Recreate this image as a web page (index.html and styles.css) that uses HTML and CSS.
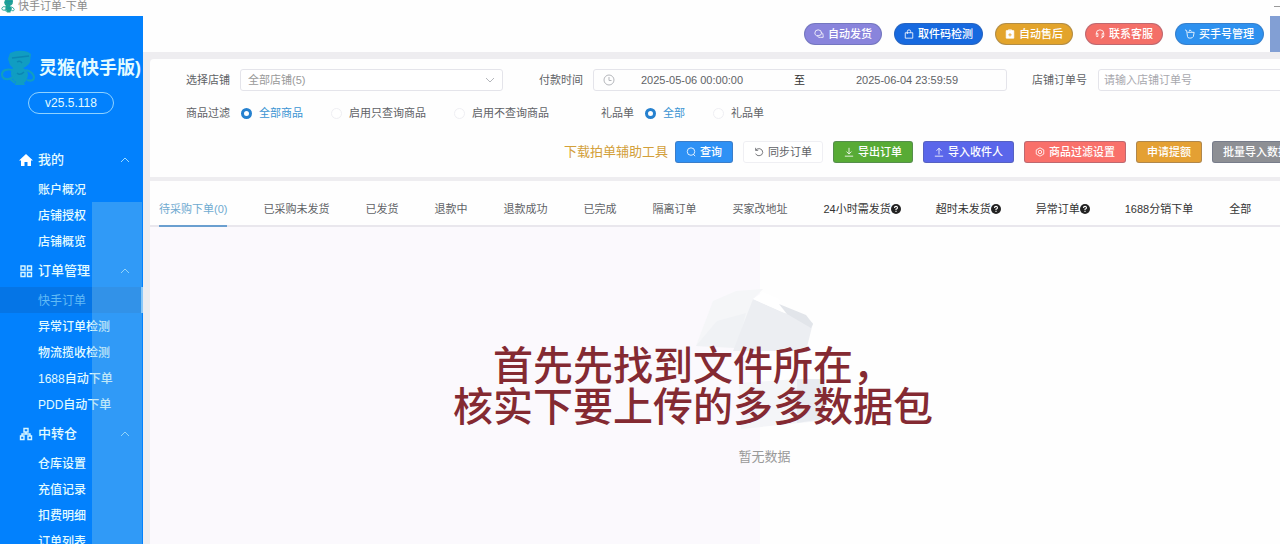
FILE: index.html
```html
<!DOCTYPE html>
<html lang="zh-CN">
<head>
    <meta charset="UTF-8">
    <meta name="viewport" content="width=device-width, initial-scale=1.0">
    <title>快手订单-下单</title>
    <link rel="stylesheet" href="styles.css">
</head>
<body>

    <div class="titlebar">
        <svg class="title-logo" viewBox="0 0 36 36"><use href="#monkey"/></svg>
        <span>快手订单-下单</span>
        <span class="minimize"></span>
    </div>

    <!-- shared icons -->
    <svg class="sprite">
        <symbol id="monkey" viewBox="0 0 36 36">
            <path d="M10 3 Q19 -1 28 2 L31 4 L30 12 Q28 16 23 18 Q28 20 28 25 Q27 31 24 33 L25 35 H15 L16 32 Q12 30 11 24 Q11 20 13 18 L10 15 L8 9 Z" fill="currentColor"/>
            <path d="M13 20 Q3 18 2 24 Q2 30 9 29 Q14 28 15 23 M26 20 Q33 22 34 27 Q34 32 27 30 M9 28 L15 33" fill="none" stroke="currentColor" stroke-width="2.2"/>
            <path d="M12 8 L29 6 M17 12 Q20 10 22 13 M17 23 Q20 26 24 22" fill="none" stroke="#0b86b4" stroke-width="1.4"/>
        </symbol>
        <symbol id="chevron" viewBox="0 0 10 10"><path d="M1 7 L5 3 L9 7" fill="none" stroke="currentColor"/></symbol>
        <symbol id="help" viewBox="0 0 10 10">
            <circle cx="5" cy="5" r="5" fill="#222"/>
            <path d="M3.5 4 Q3.5 2.4 5 2.4 Q6.6 2.4 6.5 3.9 Q6.4 4.7 5 5.2 V6.2 M5 7 V8" fill="none" stroke="#fff" stroke-width="1.1"/>
        </symbol>
    </svg>

    <div class="layout">
        <aside class="sidebar">
            <div class="brand">
                <svg class="brand-logo" viewBox="0 0 36 36"><use href="#monkey"/></svg>
                <h1>灵猴(快手版)</h1>
            </div>
            <div class="version">v25.5.118</div>

            <nav class="menu">
                <button class="menu-head">
                    <svg class="menu-icon" viewBox="0 0 14 14"><path d="M7 1 L0 7.5 H2 V13 H5.5 V9 H8.5 V13 H12 V7.5 H14 Z" fill="#fff"/></svg>
                    <span>我的</span>
                    <svg class="arrow"><use href="#chevron"/></svg>
                </button>
                <a href="#">账户概况</a>
                <a href="#">店铺授权</a>
                <a href="#">店铺概览</a>

                <button class="menu-head">
                    <svg class="menu-icon" viewBox="0 0 14 14"><path d="M2 2 H6 V6 H2 Z M8.5 2 H12.5 V6 H8.5 Z M2 8.5 H6 V12.5 H2 Z M8.5 8.5 H12.5 V12.5 H8.5 Z" fill="none" stroke="#d8f6ff" stroke-width="1.4"/></svg>
                    <span>订单管理</span>
                    <svg class="arrow"><use href="#chevron"/></svg>
                </button>
                <a href="#" class="active">快手订单</a>
                <a href="#">异常订单检测</a>
                <a href="#">物流揽收检测</a>
                <a href="#">1688自动下单</a>
                <a href="#">PDD自动下单</a>

                <button class="menu-head">
                    <svg class="menu-icon" viewBox="0 0 14 14"><path d="M5 1.5 H9 V5 H5 Z M1.5 9 H5 V12.5 H1.5 Z M9 9 H12.5 V12.5 H9 Z M7 5 V7 M3 9 V7 H11 V9" fill="none" stroke="#d8f6ff" stroke-width="1.4"/></svg>
                    <span>中转仓</span>
                    <svg class="arrow"><use href="#chevron"/></svg>
                </button>
                <a href="#">仓库设置</a>
                <a href="#">充值记录</a>
                <a href="#">扣费明细</a>
                <a href="#">订单列表</a>
            </nav>
            <div class="sheen"></div>
        </aside>

        <div class="content">
            <header class="topbar">
                <button class="pill purple">
                    <svg viewBox="0 0 12 12"><path d="M1 5 Q1 1 5 1 Q9 1 9 5 Q9 8 5 8 H3 Q1 7 1 5 Z M9 4 Q11 5 11 8 V10 H8 Q5 11 4 8"/></svg>自动发货
                </button>
                <button class="pill blue">
                    <svg viewBox="0 0 12 12"><path d="M1.5 4.5 H10.5 V11 H1.5 Z M4 6 V3 Q4 1 6 1 Q8 1 8 3 V4.5"/></svg>取件码检测
                </button>
                <button class="pill gold">
                    <svg viewBox="0 0 12 12"><path d="M1.5 2 H10.5 V11 H1.5 Z" fill="#fff"/><path d="M4 1 H8 V3 H4 Z"/><path d="M4 7 H8 M6 5 V9" stroke="#e3a42b"/></svg>自动售后
                </button>
                <button class="pill red">
                    <svg viewBox="0 0 12 12"><path d="M1.5 8 V5.5 Q1.5 1 6 1 Q10.5 1 10.5 5.5 V8 Q10 10.5 7 11 M1.5 5.5 H3.5 V9 H1.5 M10.5 5.5 H8.5 V9 H10.5"/></svg>联系客服
                </button>
                <button class="pill sky">
                    <svg viewBox="0 0 12 12"><path d="M0 1 L2 2 L3 9 Q3 11 6 11 Q9 11 10 9 L11 4 H3 M5 3 L6 1 L8 3"/></svg>买手号管理
                </button>
                <div class="topbar-end"></div>
            </header>

            <section class="panel filters">
                <div class="row">
                    <label for="shop">选择店铺</label>
                    <div class="select-box">
                        <select id="shop"><option>全部店铺(5)</option></select>
                        <svg class="down"><use href="#chevron"/></svg>
                    </div>
                    <label for="start" class="label-next">付款时间</label>
                    <div class="range">
                        <svg viewBox="0 0 12 12"><circle cx="6" cy="6" r="5"/><path d="M6 3 V6.5 H8.5"/></svg>
                        <input type="text" id="start" value="2025-05-06 00:00:00">
                        <span>至</span>
                        <input type="text" value="2025-06-04 23:59:59" aria-label="结束时间">
                    </div>
                    <label for="orderno" class="label-order">店铺订单号</label>
                    <input type="text" id="orderno" class="order-input" placeholder="请输入店铺订单号">
                </div>

                <div class="row">
                    <span class="row-label">商品过滤</span>
                    <div class="radios goods">
                        <label><input type="radio" name="goods" checked><span>全部商品</span></label>
                        <label><input type="radio" name="goods"><span>启用只查询商品</span></label>
                        <label><input type="radio" name="goods"><span>启用不查询商品</span></label>
                    </div>
                    <span class="row-label gift-label">礼品单</span>
                    <div class="radios">
                        <label><input type="radio" name="gift" checked><span>全部</span></label>
                        <label><input type="radio" name="gift"><span>礼品单</span></label>
                    </div>
                </div>

                <div class="row actions">
                    <a href="#" class="tool-link">下载拍单辅助工具</a>
                    <button class="btn primary">
                        <svg viewBox="0 0 12 12"><circle cx="6" cy="5.5" r="4.5"/><path d="M9 9 L11 11"/></svg>查询
                    </button>
                    <button class="btn plain">
                        <svg viewBox="0 0 12 12"><path d="M2 4 Q4 1.5 7 2 Q10.5 3 10.5 6.5 Q10 10.5 6 10.5 Q3 10.5 2 8 M2 1 V4 H5"/></svg>同步订单
                    </button>
                    <button class="btn green">
                        <svg viewBox="0 0 12 12"><path d="M6 1 V8 M3 5.5 L6 8.5 L9 5.5 M1 11 H11"/></svg>导出订单
                    </button>
                    <button class="btn indigo">
                        <svg viewBox="0 0 12 12"><path d="M6 9 V1.5 M3 4.5 L6 1.5 L9 4.5 M1 11 H11"/></svg>导入收件人
                    </button>
                    <button class="btn coral">
                        <svg viewBox="0 0 12 12"><path d="M6 1 L10.5 3.5 V8.5 L6 11 L1.5 8.5 V3.5 Z"/><circle cx="6" cy="6" r="2"/></svg>商品过滤设置
                    </button>
                    <button class="btn orange">申请提额</button>
                    <button class="btn gray">批量导入数据</button>
                </div>
            </section>

            <section class="panel orders">
                <div class="tabs">
                    <button class="tab active">待采购下单(0)</button>
                    <button class="tab">已采购未发货</button>
                    <button class="tab">已发货</button>
                    <button class="tab">退款中</button>
                    <button class="tab">退款成功</button>
                    <button class="tab">已完成</button>
                    <button class="tab">隔离订单</button>
                    <button class="tab">买家改地址</button>
                    <button class="tab dark">24小时需发货<svg><use href="#help"/></svg></button>
                    <button class="tab dark">超时未发货<svg><use href="#help"/></svg></button>
                    <button class="tab dark">异常订单<svg><use href="#help"/></svg></button>
                    <button class="tab dark">1688分销下单</button>
                    <button class="tab dark">全部</button>
                </div>
                <div class="empty">
                    <svg class="empty-art" viewBox="694 284 140 150">
                        <path d="M712 300 L735 290 L762 288 L752 298 L736 347 L695 345 Z" fill="#f5f6f8"/>
                        <path d="M716 320 L745 312 L736 347 L695 345 Z" fill="#f0f2f5"/>
                        <path d="M752 298 L781 311 L812 322 L805 350 L732 350 Z" fill="#eceef2"/>
                        <path d="M752 298 L762 291 L778 298 L784 312 Z" fill="#ffffff"/>
                        <path d="M778 303 L805 314 L812 323 L810 327 L786 313 Z" fill="#e2e5ea"/>
                        <path d="M738 382 L796 378 L820 378 L819 420 L740 428 Z" fill="#f4f5f8"/>
                        <path d="M796 378 L824 378 L822 418 L796 422 Z" fill="#e8ebf0"/>
                    </svg>
                    <p>暂无数据</p>
                </div>
            </section>
        </div>
    </div>

    <div class="caption">首先先找到文件所在，<br>核实下要上传的多多数据包</div>

</body>
</html>
```
FILE: styles.css
```css
* {
    box-sizing: border-box;
}
body {
    margin: 0;
    height: 100vh;
    display: flex;
    flex-direction: column;
    overflow: hidden;
    position: relative;
    font-family: "Liberation Sans", "Noto Sans CJK SC", sans-serif;
    font-size: 11px;
    line-height: 16px;
    color: #606266;
    background-color: #fefefe;
}
button, input, select {
    font: inherit;
    color: inherit;
    margin: 0;
}
button {
    cursor: pointer;
    white-space: nowrap;
}
a {
    text-decoration: none;
}
.sprite {
    display: none;
}

/* window title */
.titlebar {
    display: flex;
    align-items: center;
    height: 16px;
    padding-bottom: 4px;
    color: #8a8a8a;
}
.title-logo {
    width: 16px;
    height: 14px;
    margin-right: 2px;
    color: #20a294;
}
.minimize {
    width: 6px;
    height: 1px;
    margin-left: auto;
    background-color: #999;
}
.layout {
    flex: 1;
    display: flex;
    min-height: 0;
}

/* sidebar */
.sidebar {
    position: relative;
    flex: none;
    width: 143px;
    padding-top: 32px;
    overflow: hidden;
    background-color: #0281fd;
    color: #e3fbff;
}
.brand {
    display: flex;
    align-items: center;
    height: 40px;
}
.brand-logo {
    flex: none;
    width: 36px;
    height: 36px;
    margin-right: 3px;
    color: #109dc2;
}
.brand h1 {
    margin: 0;
    font-size: 18px;
    line-height: 24px;
    white-space: nowrap;
}
.version {
    width: 86px;
    margin: 4px 0 29px 28px;
    border: 1px solid #8fd2ff;
    border-radius: 11px;
    font-size: 12px;
    font-weight: 500;
    line-height: 20px;
    text-align: center;
}
.menu {
    display: flex;
    flex-direction: column;
}
.menu-head {
    display: flex;
    align-items: center;
    height: 33px;
    padding: 0 13px 0 19px;
    border: none;
    background: none;
    font-size: 13px;
    font-weight: 500;
}
.menu-icon {
    width: 14px;
    height: 14px;
    margin-right: 5px;
}
.arrow {
    width: 10px;
    height: 10px;
    margin-left: auto;
    color: #9fdcff;
}
.menu a {
    padding: 3px 0 0 38px;
    font-size: 12px;
    font-weight: 500;
    line-height: 23px;
    color: #e3fbff;
}
.menu a.active {
    background-color: #0575e6;
    border-right: 2px solid #8cc9fb;
    color: #62bbf6;
    font-weight: 400;
}
.sheen {
    position: absolute;
    top: 186px;
    left: 92px;
    right: 1px;
    bottom: 0;
    background-color: rgba(130, 200, 235, 0.36);
    pointer-events: none;
}

/* content */
.content {
    flex: 1;
    min-width: 0;
    display: flex;
    flex-direction: column;
    background-color: #eeedf0;
}
.topbar {
    display: flex;
    align-items: center;
    justify-content: flex-end;
    gap: 12px;
    height: 36px;
    background-color: #fefefe;
}
.topbar-end {
    align-self: stretch;
    width: 10px;
    margin-left: -6px;
    background-color: #829fd4;
}
.pill {
    display: flex;
    align-items: center;
    gap: 4px;
    height: 22px;
    padding: 0 9px;
    border: 1px solid rgba(70, 90, 130, 0.3);
    border-radius: 11px;
    color: #fff;
    font-weight: 500;
}
.pill svg, .btn svg {
    width: 10px;
    height: 10px;
    fill: none;
    stroke: currentColor;
}
.purple { background-color: #8984dc; }
.blue { background-color: #1769df; }
.gold { background-color: #e3a42b; }
.red { background-color: #f46f68; }
.sky { background-color: #2e91ef; }

.panel {
    margin-left: 7px;
    background-color: #fefefe;
    overflow: hidden;
}
.filters {
    margin-top: 7px;
    padding: 10px 0 14px 36px;
    border-radius: 4px 0 0 0;
}
.row {
    display: flex;
    align-items: center;
    height: 22px;
    white-space: nowrap;
}
.row + .row {
    margin-top: 11px;
}
.row > * {
    flex: none;
}
.select-box {
    position: relative;
    width: 263px;
    margin-left: 10px;
}
.select-box select {
    display: block;
    width: 100%;
    height: 22px;
    padding: 0 7px;
    border: 1px solid #e4e4ea;
    border-radius: 3px;
    background-color: #fff;
    color: #999;
    appearance: none;
}
.down {
    position: absolute;
    top: 6px;
    right: 8px;
    width: 10px;
    height: 10px;
    color: #b4b6bb;
    transform: rotate(180deg);
    pointer-events: none;
}
.label-next {
    margin-left: 36px;
}
.range {
    display: flex;
    align-items: center;
    width: 414px;
    height: 22px;
    margin-left: 10px;
    padding: 0 22px 0 9px;
    border: 1px solid #e4e4ea;
    border-radius: 3px;
}
.range svg {
    width: 12px;
    height: 12px;
    fill: none;
    stroke: #b4b6bb;
}
.range input {
    flex: 1;
    min-width: 0;
    padding: 0;
    border: none;
    background: none;
    text-align: center;
}
.range span {
    padding: 0 25px;
    color: #333;
}
.label-order {
    margin-left: 25px;
}
.order-input {
    width: 263px;
    height: 22px;
    margin-left: 11px;
    padding: 0 5px;
    border: 1px solid #e4e4ea;
    border-radius: 3px;
}
.order-input::placeholder {
    color: #a8a8ae;
}
.radios {
    display: flex;
    gap: 28px;
    margin-left: 11px;
}
.radios label {
    display: flex;
    align-items: center;
    gap: 7px;
}
.radios input {
    width: 11px;
    height: 11px;
    border: 1px solid #efeff3;
    border-radius: 50%;
    background-color: #fff;
    appearance: none;
}
.radios input:checked {
    border: 3px solid #2681cf;
}
.radios input:checked + span {
    color: #3b94d3;
}
.gift-label {
    margin-left: 52px;
}
.row.actions {
    gap: 10px;
    margin-top: 17px;
    padding-left: 378px;
}
.tool-link {
    margin-right: -3px;
    font-size: 13px;
    color: #d3a03a;
}
.btn {
    display: flex;
    align-items: center;
    gap: 4px;
    height: 22px;
    padding: 0 10px;
    border: 1px solid rgba(80, 90, 120, 0.35);
    border-radius: 3px;
    color: #fff;
    font-weight: 500;
}
.btn.plain {
    border-color: #efeff3;
    background-color: #fff;
    color: #606266;
    font-weight: 400;
}
.primary { background-color: #2e91f5; }
.green { background-color: #58ab35; }
.indigo { background-color: #5a66ea; }
.coral { background-color: #f9706a; }
.orange { background-color: #e4a033; }
.gray { background-color: #8d8f94; }

/* order tabs */
.orders {
    flex: 1;
    display: flex;
    flex-direction: column;
    margin-top: 4px;
}
.tabs {
    display: flex;
    gap: 36px;
    height: 46px;
    padding: 14px 0 0 9px;
    border-bottom: 2px solid #e9e7ed;
}
.tab {
    display: flex;
    flex: none;
    align-items: center;
    margin-bottom: -2px;
    padding: 0 0 2px;
    border: none;
    border-bottom: 2px solid transparent;
    background: none;
}
.tab.active {
    border-color: #6a9fd0;
    color: #6faad0;
}
.tab.dark {
    color: #333;
}
.tab svg {
    width: 10px;
    height: 10px;
    margin-right: -1px;
}
.empty {
    flex: 1;
    display: flex;
    flex-direction: column;
    align-items: center;
    padding: 58px 0 0 99px;
    background: linear-gradient(to right, #fbf9fd 54%, #fefefe 54%);
}
.empty-art {
    width: 140px;
    height: 150px;
}
.empty p {
    margin: 14px 0 0;
    font-size: 13px;
    color: #999;
}

/* subtitle over the window */
.caption {
    position: absolute;
    top: 346px;
    left: 106px;
    right: 0;
    font-size: 40px;
    font-weight: 500;
    line-height: 41px;
    text-align: center;
    color: #842a32;
    pointer-events: none;
}
```
